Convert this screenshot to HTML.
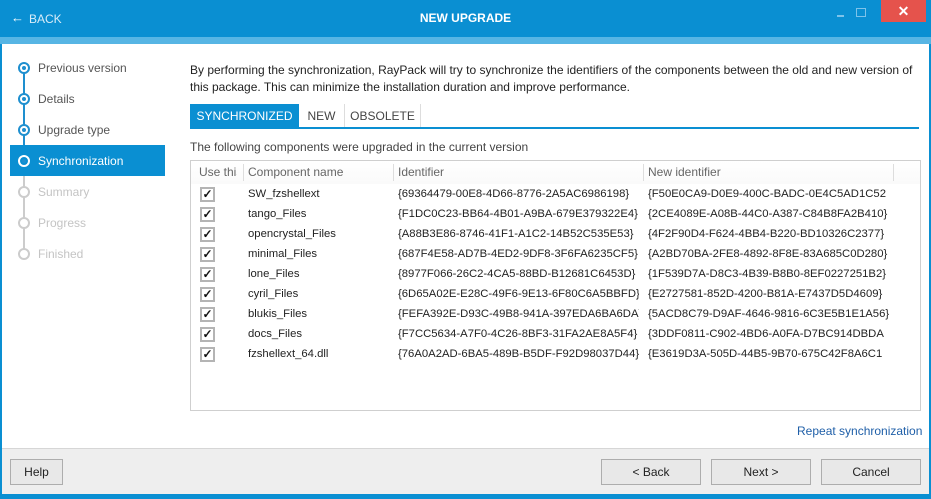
<!DOCTYPE html>
<html><head><meta charset="utf-8"><style>
*{margin:0;padding:0;box-sizing:border-box}
body{width:931px;height:499px;overflow:hidden;font-family:"Liberation Sans",sans-serif;font-size:12px;color:#222;background:#0a8fd2;position:relative}
.abs{position:absolute}
.title{left:0;top:0;width:931px;height:37px;background:#0a8fd2;color:#fff}
.stripe{left:0;top:37px;width:931px;height:7px;background:#57b5e4}
.main{left:2px;top:44px;width:927px;height:404px;background:#fff}
.foot{left:2px;top:448px;width:927px;height:46px;background:#eee;border-top:1px solid #d6d6d6}
.btn{position:absolute;top:459px;height:26px;border:1px solid #adadad;background:#e8e8e8;text-align:center;line-height:24px;font-size:12px;color:#222}
.side{left:38px;font-size:12px;color:#555}
.dot{position:absolute;left:18px;width:12px;height:12px;border-radius:50%;border:2px solid #1e8fcf;background:#fff}
.dot::after{content:"";position:absolute;left:2px;top:2px;width:4px;height:4px;border-radius:50%;background:#1e8fcf}
.dot.g{border-color:#ccc}.dot.g::after{display:none}
.row{position:absolute;left:191px;height:20px;width:720px;font-size:11.3px;line-height:20px;white-space:nowrap;color:#222}
.row span{position:absolute;overflow:hidden}
.cb{position:absolute;left:9px;top:3px;width:15px;height:15px;border:2px solid #b4b4b4;background:#fff;font-size:12px;line-height:11px;text-align:center;font-weight:bold;color:#111}
</style></head><body>
<div class="abs title">
 <div class="abs" style="left:11px;top:10px;font-size:13px">&#8592;</div>
 <div class="abs" style="left:29px;top:12px;font-size:12px;color:#d8ecf8">BACK</div>
 <div class="abs" style="left:0;width:931px;top:11px;text-align:center;font-weight:bold;font-size:12px">NEW UPGRADE</div>
 <div class="abs" style="left:837px;top:15px;width:7px;height:2px;background:#7ec3ea"></div>
 <div class="abs" style="left:856px;top:8px;width:10px;height:9px;border:1px solid #7ec3ea"></div>
 <div class="abs" style="left:881px;top:0;width:45px;height:22px;background:#e5534c;color:#fff;text-align:center;line-height:22px;font-size:14px;font-weight:bold">&#x2715;</div>
</div>
<div class="abs stripe"></div>
<div class="abs main"></div>
<div class="abs" style="left:23px;top:68px;width:2px;height:93px;background:#1e8fcf"></div>
<div class="abs" style="left:23px;top:161px;width:2px;height:93px;background:#ccc"></div>
<div class="abs" style="left:10px;top:145px;width:155px;height:31px;background:#0a8fd2"></div>
<div class="dot" style="top:62px"></div><div class="abs side" style="top:61px">Previous version</div>
<div class="dot" style="top:93px"></div><div class="abs side" style="top:92px">Details</div>
<div class="dot" style="top:124px"></div><div class="abs side" style="top:123px">Upgrade type</div>
<div class="dot" style="top:155px;border-color:#fff;background:#0a8fd2"></div><div class="abs side" style="top:154px;color:#fff">Synchronization</div>
<div class="dot g" style="top:186px"></div><div class="abs side" style="top:185px;color:#c4c4c4">Summary</div>
<div class="dot g" style="top:217px"></div><div class="abs side" style="top:216px;color:#c4c4c4">Progress</div>
<div class="dot g" style="top:248px"></div><div class="abs side" style="top:247px;color:#c4c4c4">Finished</div>
<div class="abs" style="left:190px;top:62px;width:730px;line-height:17px;font-size:12px">By performing the synchronization, RayPack will try to synchronize the identifiers of the components between the old and new version of this package. This can minimize the installation duration and improve performance.</div>
<div class="abs" style="left:190px;top:104px;width:109px;height:24px;background:#0a8fd2;color:#fff;text-align:center;line-height:24px">SYNCHRONIZED</div>
<div class="abs" style="left:299px;top:104px;width:46px;height:24px;text-align:center;line-height:24px;color:#444;border-right:1px solid #ddd">NEW</div>
<div class="abs" style="left:345px;top:104px;width:76px;height:24px;text-align:center;line-height:24px;color:#444;border-right:1px solid #ddd">OBSOLETE</div>
<div class="abs" style="left:190px;top:127px;width:729px;height:2px;background:#0a8fd2"></div>
<div class="abs" style="left:190px;top:140px;color:#444">The following components were upgraded in the current version</div>
<div class="abs" style="left:190px;top:160px;width:731px;height:251px;border:1px solid #cfcfcf;background:#fff"></div>
<div class="abs" style="left:191px;top:161px;width:729px;height:23px;color:#666;font-size:12px;line-height:23px;background:linear-gradient(#fff,#fafafa)">
 <span class="abs" style="left:8px;width:38px;overflow:hidden;white-space:nowrap">Use this</span>
 <span class="abs" style="left:52px;top:3px;width:1px;height:17px;background:#ddd"></span>
 <span class="abs" style="left:57px">Component name</span>
 <span class="abs" style="left:202px;top:3px;width:1px;height:17px;background:#ddd"></span>
 <span class="abs" style="left:207px">Identifier</span>
 <span class="abs" style="left:452px;top:3px;width:1px;height:17px;background:#ddd"></span>
 <span class="abs" style="left:457px">New identifier</span>
 <span class="abs" style="left:702px;top:3px;width:1px;height:17px;background:#ddd"></span>
</div>
<div class="row" style="top:184px"><div class="cb">&#10003;</div><span style="left:57px">SW_fzshellext</span><span style="left:207px;width:241px">{69364479-00E8-4D66-8776-2A5AC6986198}</span><span style="left:457px;width:241px">{F50E0CA9-D0E9-400C-BADC-0E4C5AD1C52</span></div>
<div class="row" style="top:204px"><div class="cb">&#10003;</div><span style="left:57px">tango_Files</span><span style="left:207px;width:241px">{F1DC0C23-BB64-4B01-A9BA-679E379322E4}</span><span style="left:457px;width:241px">{2CE4089E-A08B-44C0-A387-C84B8FA2B410}</span></div>
<div class="row" style="top:224px"><div class="cb">&#10003;</div><span style="left:57px">opencrystal_Files</span><span style="left:207px;width:241px">{A88B3E86-8746-41F1-A1C2-14B52C535E53}</span><span style="left:457px;width:241px">{4F2F90D4-F624-4BB4-B220-BD10326C2377}</span></div>
<div class="row" style="top:244px"><div class="cb">&#10003;</div><span style="left:57px">minimal_Files</span><span style="left:207px;width:241px">{687F4E58-AD7B-4ED2-9DF8-3F6FA6235CF5}</span><span style="left:457px;width:241px">{A2BD70BA-2FE8-4892-8F8E-83A685C0D280}</span></div>
<div class="row" style="top:264px"><div class="cb">&#10003;</div><span style="left:57px">lone_Files</span><span style="left:207px;width:241px">{8977F066-26C2-4CA5-88BD-B12681C6453D}</span><span style="left:457px;width:241px">{1F539D7A-D8C3-4B39-B8B0-8EF0227251B2}</span></div>
<div class="row" style="top:284px"><div class="cb">&#10003;</div><span style="left:57px">cyril_Files</span><span style="left:207px;width:241px">{6D65A02E-E28C-49F6-9E13-6F80C6A5BBFD}</span><span style="left:457px;width:241px">{E2727581-852D-4200-B81A-E7437D5D4609}</span></div>
<div class="row" style="top:304px"><div class="cb">&#10003;</div><span style="left:57px">blukis_Files</span><span style="left:207px;width:241px">{FEFA392E-D93C-49B8-941A-397EDA6BA6DA}</span><span style="left:457px;width:241px">{5ACD8C79-D9AF-4646-9816-6C3E5B1E1A56}</span></div>
<div class="row" style="top:324px"><div class="cb">&#10003;</div><span style="left:57px">docs_Files</span><span style="left:207px;width:241px">{F7CC5634-A7F0-4C26-8BF3-31FA2AE8A5F4}</span><span style="left:457px;width:241px">{3DDF0811-C902-4BD6-A0FA-D7BC914DBDA</span></div>
<div class="row" style="top:344px"><div class="cb">&#10003;</div><span style="left:57px">fzshellext_64.dll</span><span style="left:207px;width:241px">{76A0A2AD-6BA5-489B-B5DF-F92D98037D44}</span><span style="left:457px;width:241px">{E3619D3A-505D-44B5-9B70-675C42F8A6C1</span></div>
<div class="abs" style="left:797px;top:424px;color:#1f5fa8">Repeat synchronization</div>
<div class="abs foot"></div>
<div class="btn" style="left:10px;width:53px">Help</div>
<div class="btn" style="left:601px;width:100px">&lt; Back</div>
<div class="btn" style="left:711px;width:100px">Next &gt;</div>
<div class="btn" style="left:821px;width:100px">Cancel</div>
</body></html>
